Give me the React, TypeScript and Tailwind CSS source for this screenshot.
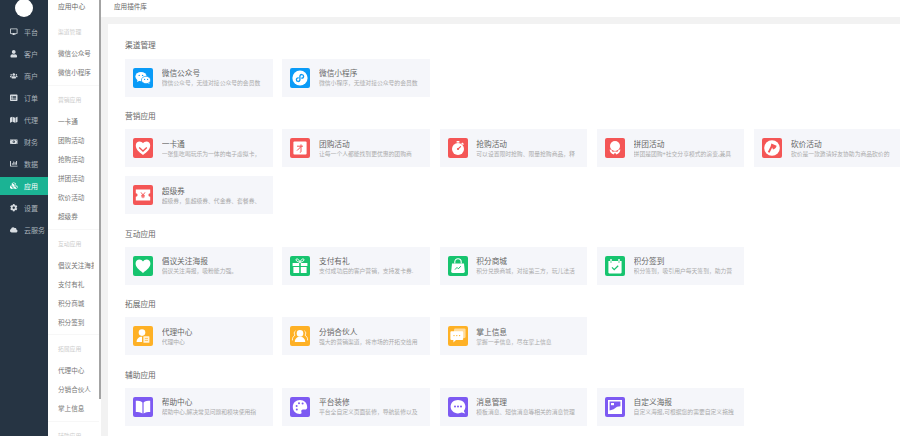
import type { ReactNode } from "react";
import {
  FaChartBar,
  FaCloud,
  FaCog,
  FaCubes,
  FaDesktop,
  FaListAlt,
  FaMap,
  FaMoneyBillAlt,
  FaUser,
  FaUsers,
} from "react-icons/fa";

const font = { fontFamily: '"Noto Sans CJK SC", "Liberation Sans", sans-serif' };

const navItems = [
  { label: "平台", icon: <FaDesktop /> },
  { label: "客户", icon: <FaUser /> },
  { label: "商户", icon: <FaUsers /> },
  { label: "订单", icon: <FaListAlt /> },
  { label: "代理", icon: <FaMap /> },
  { label: "财务", icon: <FaMoneyBillAlt /> },
  { label: "数据", icon: <FaChartBar /> },
  { label: "应用", icon: <FaCubes />, active: true },
  { label: "设置", icon: <FaCog /> },
  { label: "云服务", icon: <FaCloud /> },
];

const subGroups = [
  { title: "渠道管理", items: ["微信公众号", "微信小程序"] },
  { title: "营销应用", items: ["一卡通", "团购活动", "抢购活动", "拼团活动", "砍价活动", "超级券"] },
  { title: "互动应用", items: ["倡议关注海报", "支付有礼", "积分商城", "积分签到"] },
  { title: "拓展应用", items: ["代理中心", "分销合伙人", "掌上信息"] },
  { title: "辅助应用", items: [] },
];

// all icons share a 20x20 box, drawn white on the tile colour
function Tile({ bg, children }: { bg: string; children: ReactNode }) {
  return (
    <svg viewBox="0 0 20 20" className="h-5 w-5 shrink-0">
      <rect width="20" height="20" rx="2" fill={bg} />
      {children}
    </svg>
  );
}

const BLUE = "#0a9bf7";
const RED = "#f45656";
const GREEN = "#17c46f";
const YELLOW = "#feb126";
const PURPLE = "#7d5af2";

const icons: Record<string, ReactNode> = {
  wechat: (
    <Tile bg={BLUE}>
      <ellipse cx="8" cy="8.6" rx="5.6" ry="4.6" fill="#fff" />
      <path d="M4.6 11.5 4 14l3-1.6z" fill="#fff" />
      <ellipse cx="13" cy="12" rx="4.6" ry="3.7" fill="#fff" stroke={BLUE} strokeWidth="0.7" />
      <path d="M15 15l1.4 1.2-.3-2z" fill="#fff" />
      <circle cx="6.2" cy="7.4" r=".7" fill={BLUE} />
      <circle cx="9.6" cy="7.4" r=".7" fill={BLUE} />
      <circle cx="11.6" cy="11.4" r=".6" fill={BLUE} />
      <circle cx="14.6" cy="11.4" r=".6" fill={BLUE} />
    </Tile>
  ),
  mini: (
    <Tile bg={BLUE}>
      <circle cx="10" cy="10" r="7.6" fill="#fff" />
      <path
        d="M6.4 11.8c0 2 3 2.400 3.500.2V8c.5-2.200 3.700-1.800 3.700.2 0 1.200-1 1.900-1.900 1.900M8.300 9.800c-1 0-1.900.8-1.900 2"
        fill="none"
        stroke={BLUE}
        strokeWidth="1.3"
        strokeLinecap="round"
      />
    </Tile>
  ),
  card: (
    <Tile bg={RED}>
      <path d="M10 17C5.600 13.600 2.800 11 2.800 7.400 2.800 5 4.500 3.400 6.500 3.400c1.500 0 2.700.7 3.500 1.900.8-1.200 2-1.900 3.500-1.900 2 0 3.700 1.600 3.700 4C17.200 11 14.400 13.600 10 17z" fill="#fff" />
      <path d="M6.200 9.400 10 13l3.800-3.600" fill="none" stroke={RED} strokeWidth="1.4" />
    </Tile>
  ),
  group: (
    <Tile bg={RED}>
      <rect x="3.4" y="3.4" width="13.2" height="13.2" rx="1" fill="#fff" />
      <path d="M7 8.200h6M11 6.400v7.200c0 .6-.5.8-1.200.6M11 8.600 7 12.600" fill="none" stroke={RED} strokeWidth="1" />
    </Tile>
  ),
  clock: (
    <Tile bg={RED}>
      <circle cx="10" cy="11" r="6" fill="#fff" />
      <rect x="8.6" y="3" width="2.8" height="1.6" fill="#fff" />
      <path d="m14.200 4.400 1.800 1.600-1 1-1.800-1.600z" fill="#fff" />
      <path d="M10 11 12.600 8.600" stroke={RED} strokeWidth="1.1" strokeLinecap="round" />
      <circle cx="10" cy="11" r="1.1" fill={RED} />
    </Tile>
  ),
  pin: (
    <Tile bg={RED}>
      <circle cx="10" cy="8" r="5" fill="#fff" />
      <path d="M4.600 11.400c.2 2.400 1.800 4.400 4 5l1.400-1.600 1.400 1.600c2.200-.6 3.800-2.600 4-5l-1.600.4-1.600 2.200-1.200-.6h-2l-1.200.6L6.200 11.800z" fill="#fff" />
    </Tile>
  ),
  axe: (
    <Tile bg={RED}>
      <circle cx="10" cy="10" r="7.8" fill="#fff" />
      <path d="M9.400 5.400 14.600 7.800c-.4 2-1.800 3.400-3.600 3.600L10.200 9.400 7.600 14.800 5.800 14 8.600 8.400z" fill={RED} />
    </Tile>
  ),
  coupon: (
    <Tile bg={RED}>
      <path d="M2.800 4.600h14.400v3.600a1.800 1.800 0 0 0 0 3.600v3.600H2.800v-3.600a1.800 1.800 0 0 0 0-3.600z" fill="#fff" />
      <path d="M8 7.400 10 10l2-2.600M10 10v3.200M8.200 10.400h3.600M8.200 11.800h3.600" fill="none" stroke={RED} strokeWidth=".9" />
    </Tile>
  ),
  heart: (
    <Tile bg={GREEN}>
      <path d="M10 17C5.500 13.400 2.600 11 2.600 7.600 2.600 5.200 4.400 3.600 6.400 3.600c1.500 0 2.800.8 3.600 2 .8-1.200 2.100-2 3.600-2 2 0 3.800 1.600 3.800 4 0 3.400-2.900 5.800-7.400 9.400z" fill="#fff" />
    </Tile>
  ),
  gift: (
    <Tile bg={GREEN}>
      <path d="M2.600 7h6.600v3H2.600zM10.800 7h6.600v3h-6.600zM3.400 11h5.800v6H3.400zM10.800 11h5.800v6h-5.800z" fill="#fff" />
      <path d="M10 6.400C8.400 5.800 6 5.200 6 3.800c0-1.600 3-1.200 4 2.600zm0 0c1.600-.6 4-1.200 4-2.600 0-1.600-3-1.200-4 2.600z" fill="none" stroke="#fff" strokeWidth="1" />
    </Tile>
  ),
  bag: (
    <Tile bg={GREEN}>
      <path d="M4 7.400h12l.8 8.200a1.400 1.400 0 0 1-1.400 1.400H4.600a1.400 1.400 0 0 1-1.400-1.400z" fill="#fff" />
      <path d="M6.800 7.400V6a3.200 3.200 0 0 1 6.400 0v1.400" fill="none" stroke="#fff" strokeWidth="1.1" />
      <path d="m7 13.600 2-2.200 1.400 1.400 2.400-2.600" fill="none" stroke={GREEN} strokeWidth="1" />
    </Tile>
  ),
  calendar: (
    <Tile bg={GREEN}>
      <path d="M3.400 5h13.200v11.600a.8.8 0 0 1-.8.8H4.200a.8.8 0 0 1-.8-.8z" fill="#fff" />
      <path d="M6 3v3.600M14 3v3.600" stroke="#fff" strokeWidth="1.4" />
      <path d="M6 5.600v1M14 5.600v1" stroke={GREEN} strokeWidth="1.4" />
      <path d="m7 11.400 2.200 2.200 4-3.800" fill="none" stroke={GREEN} strokeWidth="1.3" />
    </Tile>
  ),
  agent: (
    <Tile bg={YELLOW}>
      <circle cx="9" cy="6.6" r="3.3" fill="#fff" />
      <path d="M3.600 16c0-3.200 2.200-5.200 5.400-5.200v5.200z" fill="#fff" />
      <rect x="10.4" y="10.2" width="6" height="6.6" rx=".5" fill="#fff" opacity=".85" />
      <path d="M11.800 12.400h3.200M11.800 14.400h3.200" stroke={YELLOW} strokeWidth=".7" />
    </Tile>
  ),
  people: (
    <Tile bg={YELLOW}>
      <circle cx="10" cy="7.4" r="3.3" fill="#fff" />
      <path d="M4.800 16c0-3.200 2.200-5.200 5.200-5.200s5.200 2 5.200 5.200z" fill="#fff" />
      <path d="M5.600 4.800C4 5.600 3.800 8 5 9.200 3.200 10.400 2.200 12 2.400 14.400M14.400 4.800c1.600.8 1.800 3.200.6 4.400 1.800 1.200 2.800 2.800 2.600 5.200" fill="none" stroke="#fff" strokeWidth=".8" />
    </Tile>
  ),
  chat: (
    <Tile bg={YELLOW}>
      <rect x="6" y="2.6" width="11.6" height="9.4" rx="1.2" fill="#fff" opacity=".55" />
      <path d="M3.400 5.200h10.800a1 1 0 0 1 1 1V13a1 1 0 0 1-1 1H8l-2.600 2.600V14h-2a1 1 0 0 1-1-1V6.200a1 1 0 0 1 1-1z" fill="#fff" />
      <circle cx="6" cy="9.6" r=".7" fill={YELLOW} />
      <circle cx="8.8" cy="9.6" r=".7" fill={YELLOW} />
      <circle cx="11.6" cy="9.6" r=".7" fill={YELLOW} />
    </Tile>
  ),
  book: (
    <Tile bg={PURPLE}>
      <path d="M9.400 5.400v11.200C7.600 15.400 5.400 15 2.800 15V3.800c2.800 0 5 .4 6.600 1.600zM10.600 5.400v11.200c1.800-1.200 4-1.600 6.600-1.600V3.800c-2.800 0-5 .4-6.600 1.600z" fill="#fff" />
    </Tile>
  ),
  palette: (
    <Tile bg={PURPLE}>
      <path d="M10 3C5.800 3 2.800 6.200 2.800 10s3 7 7 7c1.600 0 2-1 1.600-2-.5-1.300.2-2.400 1.600-2.400h2c1.300 0 2.200-1 2.200-2.400C17.200 6 14.200 3 10 3z" fill="#fff" />
      <circle cx="6.6" cy="9" r="1" fill={PURPLE} />
      <circle cx="9" cy="6.2" r="1" fill={PURPLE} />
      <circle cx="12.6" cy="6.4" r="1" fill={PURPLE} />
      <circle cx="6.8" cy="12.4" r="1" fill={PURPLE} />
    </Tile>
  ),
  bubble: (
    <Tile bg={PURPLE}>
      <path d="M10 3c4.200 0 7.400 2.800 7.400 6.600 0 1.800-.6 3.200-1.600 4.400l1.400 2.400-3.400-.8c-1.100.5-2.400.8-3.800.8-4.200 0-7.400-2.900-7.400-6.800C2.600 5.800 5.800 3 10 3z" fill="#fff" />
      <circle cx="7" cy="9.6" r="1" fill={PURPLE} />
      <circle cx="10" cy="9.6" r="1" fill={PURPLE} />
      <circle cx="13" cy="9.6" r="1" fill={PURPLE} />
    </Tile>
  ),
  poster: (
    <Tile bg={PURPLE}>
      <rect x="3" y="3" width="14" height="14" fill="#fff" />
      <path d="M4.600 4.600h10.800v4.600l-3.400.6-3.400 2.400-4 1.200z" fill={PURPLE} />
      <rect x="6" y="6" width="3" height="2.2" fill="#fff" />
    </Tile>
  ),
};

const sections = [
  {
    title: "渠道管理",
    apps: [
      { icon: "wechat", name: "微信公众号", desc: "微信公众号，无缝对接公众号的会员数" },
      { icon: "mini", name: "微信小程序", desc: "微信小程序，无缝对接公众号的会员数" },
    ],
  },
  {
    title: "营销应用",
    apps: [
      { icon: "card", name: "一卡通", desc: "一张集吃喝玩乐为一体的电子虚拟卡，" },
      { icon: "group", name: "团购活动", desc: "让每一个人都能找到更优惠的团购商" },
      { icon: "clock", name: "抢购活动", desc: "可以设置限时抢购、限量抢购商品，释" },
      { icon: "pin", name: "拼团活动", desc: "拼团是团购+社交分享模式的演变,兼具" },
      { icon: "axe", name: "砍价活动", desc: "砍价是一款邀请好友协助为商品砍价的" },
      { icon: "coupon", name: "超级券", desc: "超级券，集超级券、代金券、套餐券、" },
    ],
  },
  {
    title: "互动应用",
    apps: [
      { icon: "heart", name: "倡议关注海报", desc: "倡议关注海报，吸粉能力强。" },
      { icon: "gift", name: "支付有礼", desc: "支付成功后的客户营销，支持发卡券." },
      { icon: "bag", name: "积分商城", desc: "积分兑换商城，对接第三方，玩儿法活" },
      { icon: "calendar", name: "积分签到", desc: "积分签到，吸引用户每天签到，助力营" },
    ],
  },
  {
    title: "拓展应用",
    apps: [
      { icon: "agent", name: "代理中心", desc: "代理中心" },
      { icon: "people", name: "分销合伙人", desc: "强大的营销渠道，将市场的开拓交给用" },
      { icon: "chat", name: "掌上信息", desc: "掌握一手信息，尽在掌上信息" },
    ],
  },
  {
    title: "辅助应用",
    apps: [
      { icon: "book", name: "帮助中心", desc: "帮助中心,解决常见问题和模块使用指" },
      { icon: "palette", name: "平台装修", desc: "平台全自定义页面装修，导航装修以及" },
      { icon: "bubble", name: "消息管理", desc: "模板消息、短信消息等相关的消息管理" },
      { icon: "poster", name: "自定义海报", desc: "自定义海报,可根据您的需要自定义拖拽" },
    ],
  },
];

export default function App() {
  return (
    <div className="flex h-[436px] w-[900px] overflow-hidden bg-white" style={font}>
      {/* dark main nav */}
      <aside className="w-[48px] shrink-0 bg-[#263443]">
        <div className="mx-auto -mt-px h-[18px] w-[18px] rounded-full bg-white" />
        <ul className="mt-[6px] flex flex-col gap-[4px]">
          {navItems.map((item) => (
            <li
              key={item.label}
              className={`flex h-[18px] items-center pl-[10px] text-[7px] ${
                item.active ? "bg-[#1bb394] text-white" : "text-[#a9b2ba]"
              }`}
            >
              <span className={`w-[14px] text-[7.5px] ${item.active ? "text-white" : "text-[#d8dde2]"}`}>{item.icon}</span>
              <span className="whitespace-nowrap">{item.label}</span>
            </li>
          ))}
        </ul>
      </aside>

      {/* secondary nav */}
      <nav className="relative w-[53px] shrink-0 overflow-hidden">
        <p className="pl-[10px] pt-[1px] text-[6.8px] leading-[11px] text-[#666]">应用中心</p>
        <div className="w-[51px] pt-[14px]">
          {subGroups.map((group, i) => (
            <div key={group.title} className={i > 0 ? "mt-[6.8px] border-t border-[#f7f7f7] pt-[8px]" : ""}>
              <p className="pl-[10px] text-[5.8px] leading-[12px] text-[#ccc]">{group.title}</p>
              <ul className="mt-[9px] flex flex-col gap-[7px]">
                {group.items.map((name) => (
                  <li key={name} className="mr-[5px] h-[12px] overflow-hidden whitespace-nowrap pl-[10px] text-[6.6px] leading-[12px] text-[#777]">
                    {name}
                  </li>
                ))}
              </ul>
            </div>
          ))}
        </div>
        <div className="absolute right-0 top-0 h-[399px] w-[2px] bg-[#a3a3a3]" />
      </nav>

      {/* main area */}
      <main className="min-w-0 flex-1">
        <div className="h-[17px] pl-[13px] text-[6.6px] leading-[13px] text-[#666]">应用插件库</div>
        <div className="flex h-[419px] border-t-[7px] border-[#f2f2f2]">
          <div className="w-[7px] shrink-0 bg-[#f2f2f2]" />
          <div className="flex-1 pl-[17px] pt-[14.3px]">
            {sections.map((section, i) => (
              <section key={section.title} className={i > 0 ? "mt-[12.2px]" : ""}>
                <h2 className="mb-[6.3px] text-[7.7px] font-normal leading-[14px] text-[#666]">{section.title}</h2>
                <div className="grid grid-cols-[repeat(5,147.5px)] gap-x-[9.8px] gap-y-[9.4px]">
                  {section.apps.map((app) => (
                    <div key={app.name} className="flex h-[38px] items-center gap-[8.7px] bg-[#f5f6fa] pl-[8px]">
                      {icons[app.icon]}
                      <div className="min-w-0 flex-1 overflow-hidden pr-[8px]">
                        <p className="whitespace-nowrap text-[7.7px] leading-[11px] text-[#666]">{app.name}</p>
                        <p className="whitespace-nowrap text-[5.8px] leading-[10px] text-[#aaa]">{app.desc}</p>
                      </div>
                    </div>
                  ))}
                </div>
              </section>
            ))}
          </div>
        </div>
      </main>
    </div>
  );
}
